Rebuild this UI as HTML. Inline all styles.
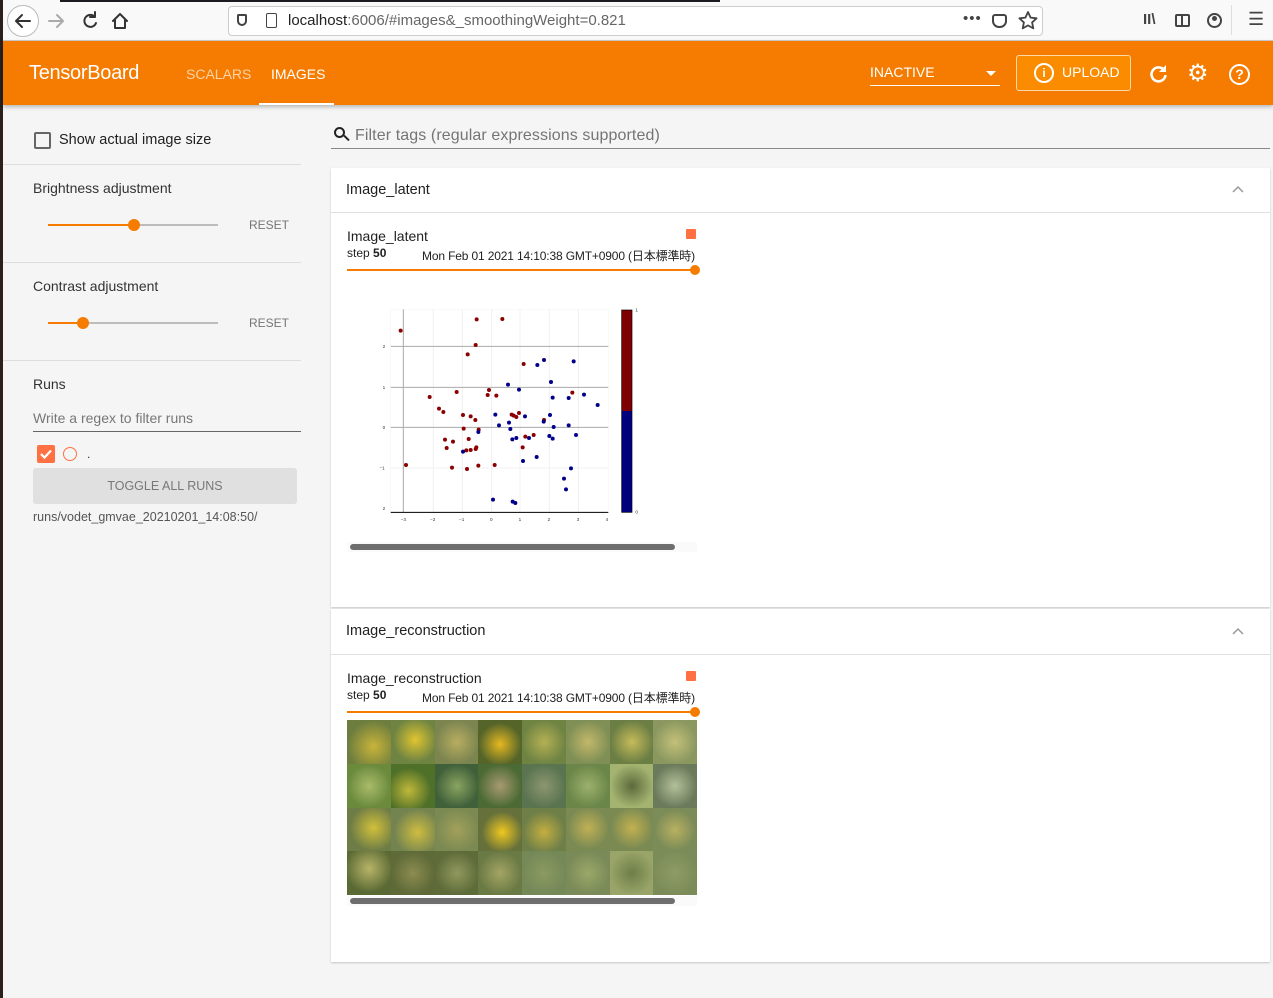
<!DOCTYPE html>
<html><head><meta charset="utf-8"><style>
*{box-sizing:border-box;margin:0;padding:0}
body{width:1273px;height:998px;overflow:hidden;background:#f5f5f5;font-family:"Liberation Sans","Noto Sans CJK JP",sans-serif;position:relative;color:#212121}
.a{position:absolute}
.t{position:absolute;white-space:nowrap}
.tile{position:absolute;width:44px;height:44px}
</style></head><body>
<!-- browser chrome -->
<div class="a" style="left:0;top:0;width:1273px;height:41px;background:#f9f9fa;border-bottom:1px solid #ccc"></div>
<div class="a" style="left:0;top:0;width:3px;height:998px;background:#2a211b"></div>
<div class="a" style="left:60px;top:0;width:660px;height:2px;background:#1c1b22"></div>
<div class="a" style="left:7px;top:5px;width:32px;height:32px;border:1px solid #bbb;border-radius:50%;background:#fff"></div>
<svg class="a" style="left:0;top:0" width="140" height="41"><g fill="none" stroke-width="2" stroke-linecap="round" stroke-linejoin="round">
<path d="M30 21H16M22 15l-6 6 6 6" stroke="#333"/><path d="M49 21h14M57 15l6 6-6 6" stroke="#aaa"/>
<path d="M95 17a6 6 0 1 0 1 6M95 12v5h-5" stroke="#333"/><path d="M113 21l7-7 7 7M115 19v9h10v-9" stroke="#333"/></g></svg>
<div class="a" style="left:228px;top:6px;width:815px;height:30px;background:#fff;border:1px solid #ccc;border-radius:4px"></div>
<div class="a" style="left:237px;top:14px;width:10px;height:12px;border:2px solid #444;border-radius:2px 2px 6px 6px"></div>
<div class="a" style="left:266px;top:13px;width:11px;height:15px;border:1.5px solid #444;border-radius:2px"></div>
<div class="t" style="left:288px;top:12px;font-size:15px;color:#222">localhost<span style="color:#666">:6006/#images&amp;_smoothingWeight=0.821</span></div>
<div class="t" style="left:963px;top:10px;font-size:15px;color:#444;letter-spacing:1px">•••</div>
<div class="a" style="left:992px;top:14px;width:15px;height:14px;border:2px solid #444;border-radius:3px 3px 7px 7px"></div>
<svg class="a" style="left:1018px;top:11px" width="20" height="20"><path d="M10 1l2.6 5.6 6 .7-4.5 4.1 1.2 6L10 14.4 4.7 17.4l1.2-6L1.4 7.3l6-.7z" fill="none" stroke="#444" stroke-width="1.8" stroke-linejoin="round"/></svg>
<div class="t" style="left:1143px;top:11px;font-size:15px;color:#444;font-weight:bold">II\</div>
<div class="a" style="left:1175px;top:14px;width:15px;height:13px;border:2px solid #444;border-radius:2px"></div>
<div class="a" style="left:1181px;top:14px;width:2px;height:13px;background:#444"></div>
<div class="a" style="left:1207px;top:13px;width:15px;height:15px;border:2px solid #444;border-radius:50%"></div>
<div class="a" style="left:1212px;top:16px;width:5px;height:5px;background:#444;border-radius:50%"></div>
<div class="a" style="left:1231px;top:5px;width:1px;height:30px;background:#ddd"></div>
<div class="t" style="left:1248px;top:9px;font-size:18px;color:#444">☰</div>
<!-- header -->
<div class="a" style="left:3px;top:41px;width:1270px;height:64px;background:#f57c00;box-shadow:0 2px 4px rgba(0,0,0,.25)"></div>
<div class="t" style="left:29px;top:62px;font-size:20px;color:#fff;letter-spacing:-0.3px">TensorBoard</div>
<div class="t" style="left:186px;top:66px;font-size:14px;color:#fdd3a8">SCALARS</div>
<div class="t" style="left:271px;top:66px;font-size:14px;color:#fff">IMAGES</div>
<div class="a" style="left:259px;top:103px;width:75px;height:2px;background:#fff"></div>
<div class="t" style="left:870px;top:64px;font-size:14px;color:#fff">INACTIVE</div>
<div class="a" style="left:986px;top:71px;width:0;height:0;border-left:5px solid transparent;border-right:5px solid transparent;border-top:5px solid #fff"></div>
<div class="a" style="left:870px;top:85px;width:130px;height:1px;background:#fff"></div>
<div class="a" style="left:1016px;top:55px;width:115px;height:36px;border:1px solid #fcd7a8;border-radius:3px;background:#fb8c00"></div>
<div class="a" style="left:1034px;top:63px;width:20px;height:20px;border:2px solid #fff;border-radius:50%;color:#fff;font-size:12px;text-align:center;line-height:16px;font-weight:bold">i</div>
<div class="t" style="left:1062px;top:64px;font-size:14px;color:#fff">UPLOAD</div>
<svg class="a" style="left:1148px;top:63px" width="22" height="22"><path d="M16 7a7 7 0 1 0 1.5 5" fill="none" stroke="#fff" stroke-width="2.6"/><path d="M18 2v7h-7z" fill="#fff"/></svg>
<div class="t" style="left:1187px;top:59px;font-size:24px;color:#fff">⚙</div>
<div class="a" style="left:1229px;top:64px;width:21px;height:21px;border:2px solid #fff;border-radius:50%;color:#fff;font-size:14px;text-align:center;line-height:17px;font-weight:bold">?</div>
<!-- sidebar -->
<div class="a" style="left:34px;top:132px;width:17px;height:17px;border:2px solid #666;border-radius:2px"></div>
<div class="t" style="left:59px;top:132px;font-size:14.5px;color:#212121">Show actual image size</div>
<div class="a" style="left:3px;top:164px;width:298px;height:1px;background:#ddd"></div>
<div class="t" style="left:33px;top:180px;font-size:14px;color:#333">Brightness adjustment</div>
<div class="a" style="left:48px;top:224px;width:170px;height:2px;background:#bdbdbd"></div>
<div class="a" style="left:48px;top:224px;width:86px;height:2px;background:#f57c00"></div>
<div class="a" style="left:128px;top:219px;width:12px;height:12px;border-radius:50%;background:#f57c00"></div>
<div class="t" style="left:249px;top:218px;font-size:12px;color:#757575">RESET</div>
<div class="a" style="left:3px;top:262px;width:298px;height:1px;background:#ddd"></div>
<div class="t" style="left:33px;top:278px;font-size:14px;color:#333">Contrast adjustment</div>
<div class="a" style="left:48px;top:322px;width:170px;height:2px;background:#bdbdbd"></div>
<div class="a" style="left:48px;top:322px;width:35px;height:2px;background:#f57c00"></div>
<div class="a" style="left:77px;top:317px;width:12px;height:12px;border-radius:50%;background:#f57c00"></div>
<div class="t" style="left:249px;top:316px;font-size:12px;color:#757575">RESET</div>
<div class="a" style="left:3px;top:360px;width:298px;height:1px;background:#ddd"></div>
<div class="t" style="left:33px;top:376px;font-size:14px;color:#333">Runs</div>
<div class="t" style="left:33px;top:410px;font-size:14px;color:#777">Write a regex to filter runs</div>
<div class="a" style="left:33px;top:431px;width:268px;height:1px;background:#666"></div>
<div class="a" style="left:37px;top:445px;width:18px;height:18px;border-radius:2px;background:#ff7043"></div>
<svg class="a" style="left:37px;top:445px" width="18" height="18"><path d="M4 9l3.5 3.5L14 5.5" fill="none" stroke="#fff" stroke-width="2.2"/></svg>
<div class="a" style="left:63px;top:447px;width:14px;height:14px;border-radius:50%;border:1.5px solid #ff7043"></div>
<div class="t" style="left:87px;top:447px;font-size:12px;color:#333">.</div>
<div class="a" style="left:33px;top:468px;width:264px;height:36px;background:#e0e0e0;border-radius:3px;text-align:center;line-height:36px;font-size:12.5px;color:#777">TOGGLE ALL RUNS</div>
<div class="t" style="left:33px;top:510px;font-size:12.5px;color:#555">runs/vodet_gmvae_20210201_14:08:50/</div>
<!-- filter -->
<div class="a" style="left:334px;top:127px;width:11px;height:11px;border:2px solid #222;border-radius:50%"></div>
<div class="a" style="left:343px;top:137px;width:7px;height:2px;background:#222;transform:rotate(45deg)"></div>
<div class="t" style="left:355px;top:127px;font-size:16px;color:#757575;letter-spacing:0.1px">Filter tags (regular expressions supported)</div>
<div class="a" style="left:331px;top:148px;width:939px;height:1px;background:#888"></div>
<!-- card 1 -->
<div class="a" style="left:331px;top:168px;width:939px;height:439px;background:#fff;box-shadow:0 1px 2px rgba(0,0,0,.2)"></div>
<div class="a" style="left:331px;top:212px;width:939px;height:1px;background:#e0e0e0"></div>
<div class="t" style="left:346px;top:182px;font-size:14.5px;color:#212121">Image_latent</div>
<svg class="a" style="left:1231px;top:184px" width="14" height="10"><path d="M2 8l5-5 5 5" fill="none" stroke="#999" stroke-width="1.5"/></svg>
<div class="t" style="left:347px;top:228px;font-size:14px;color:#212121">Image_latent</div>
<div class="t" style="left:347px;top:246px;font-size:12px;color:#212121">step <b>50</b></div>
<div class="t" style="left:422px;top:247px;font-size:12px;color:#212121;letter-spacing:-0.15px">Mon Feb 01 2021 14:10:38 GMT+0900 (日本標準時)</div>
<div class="a" style="left:686px;top:229px;width:10px;height:10px;background:#ff7043;border-radius:1px"></div>
<div class="a" style="left:347px;top:269px;width:348px;height:2px;background:#f57c00"></div>
<div class="a" style="left:690px;top:265px;width:10px;height:10px;border-radius:50%;background:#f57c00"></div>
<svg class="a" style="left:340px;top:220px" width="370" height="340" viewBox="0 0 1110 1020">
<rect x="152" y="268" width="653" height="609" fill="#fff" stroke="#eee"/>
<g stroke="#f0f0f0" stroke-width="3"><line x1="280" y1="268" x2="280" y2="877"/><line x1="367" y1="268" x2="367" y2="877"/><line x1="455" y1="268" x2="455" y2="877"/><line x1="540" y1="268" x2="540" y2="877"/><line x1="628" y1="268" x2="628" y2="877"/><line x1="715" y1="268" x2="715" y2="877"/><line x1="152" y1="744" x2="805" y2="744"/></g>
<g stroke="#aaa" stroke-width="3"><line x1="152" y1="379" x2="805" y2="379"/><line x1="152" y1="502" x2="805" y2="502"/><line x1="152" y1="622" x2="805" y2="622"/><line x1="190" y1="268" x2="190" y2="877"/></g>
<line x1="152" y1="877" x2="805" y2="877" stroke="#000" stroke-width="3"/>
<g font-size="14" fill="#333" font-family="Liberation Sans"><text x="128" y="384">2</text><text x="128" y="507">1</text><text x="128" y="627">0</text><text x="118" y="749">−1</text><text x="128" y="870">2</text>
<text x="182" y="903">−3</text><text x="270" y="903">−2</text><text x="357" y="903">−1</text><text x="450" y="903">0</text><text x="536" y="903">1</text><text x="623" y="903">2</text><text x="710" y="903">3</text><text x="797" y="903">4</text><text x="886" y="275">1</text><text x="886" y="880">0</text></g>
<rect x="845" y="270" width="31" height="303" fill="#7f0000"/><rect x="845" y="573" width="31" height="304" fill="#00007f"/><rect x="845" y="270" width="31" height="607" fill="none" stroke="#000" stroke-width="2"/>
<g fill="#8b0000">
<circle cx="182" cy="332" r="6"/><circle cx="410" cy="298" r="6"/><circle cx="487" cy="297" r="6"/><circle cx="407" cy="375" r="6"/><circle cx="383" cy="403" r="6"/><circle cx="551" cy="432" r="6"/><circle cx="269" cy="531" r="6"/><circle cx="350" cy="516" r="6"/><circle cx="447" cy="510" r="6"/><circle cx="443" cy="525" r="6"/><circle cx="469" cy="527" r="6"/><circle cx="297" cy="566" r="6"/><circle cx="310" cy="576" r="6"/><circle cx="369" cy="585" r="6"/><circle cx="392" cy="589" r="6"/><circle cx="406" cy="600" r="6"/><circle cx="515" cy="584" r="6"/><circle cx="521" cy="587" r="6"/><circle cx="529" cy="591" r="6"/><circle cx="537" cy="579" r="6"/><circle cx="612" cy="600" r="6"/><circle cx="697" cy="518" r="6"/><circle cx="371" cy="626" r="6"/><circle cx="416" cy="629" r="6"/><circle cx="315" cy="659" r="6"/><circle cx="339" cy="665" r="6"/><circle cx="386" cy="657" r="6"/><circle cx="320" cy="684" r="6"/><circle cx="556" cy="650" r="6"/><circle cx="581" cy="645" r="6"/><circle cx="548" cy="682" r="6"/><circle cx="409" cy="682" r="6"/><circle cx="379" cy="691" r="6"/><circle cx="392" cy="690" r="6"/><circle cx="407" cy="687" r="6"/><circle cx="198" cy="735" r="6"/><circle cx="336" cy="743" r="6"/><circle cx="381" cy="747" r="6"/><circle cx="415" cy="737" r="6"/><circle cx="464" cy="735" r="6"/></g>
<g fill="#00008b">
<circle cx="504" cy="494" r="6"/><circle cx="537" cy="509" r="6"/><circle cx="592" cy="435" r="6"/><circle cx="612" cy="420" r="6"/><circle cx="701" cy="424" r="6"/><circle cx="633" cy="486" r="6"/><circle cx="638" cy="533" r="6"/><circle cx="686" cy="534" r="6"/><circle cx="732" cy="524" r="6"/><circle cx="773" cy="555" r="6"/><circle cx="466" cy="584" r="6"/><circle cx="555" cy="589" r="6"/><circle cx="630" cy="585" r="6"/><circle cx="611" cy="605" r="6"/><circle cx="507" cy="608" r="6"/><circle cx="477" cy="616" r="6"/><circle cx="511" cy="627" r="6"/><circle cx="641" cy="621" r="6"/><circle cx="686" cy="616" r="6"/><circle cx="415" cy="636" r="6"/><circle cx="517" cy="658" r="6"/><circle cx="529" cy="654" r="6"/><circle cx="567" cy="654" r="6"/><circle cx="628" cy="648" r="6"/><circle cx="638" cy="656" r="6"/><circle cx="708" cy="645" r="6"/><circle cx="369" cy="695" r="6"/><circle cx="549" cy="723" r="6"/><circle cx="590" cy="711" r="6"/><circle cx="693" cy="745" r="6"/><circle cx="672" cy="776" r="6"/><circle cx="678" cy="808" r="6"/><circle cx="459" cy="839" r="6"/><circle cx="518" cy="845" r="6"/><circle cx="526" cy="849" r="6"/></g>
</svg>
<div class="a" style="left:347px;top:542px;width:350px;height:10px;background:#fafafa"></div>
<div class="a" style="left:350px;top:544px;width:325px;height:6px;border-radius:3px;background:#6e6e6e"></div>
<!-- card 2 -->
<div class="a" style="left:331px;top:609px;width:939px;height:353px;background:#fff;box-shadow:0 1px 2px rgba(0,0,0,.2)"></div>
<div class="a" style="left:331px;top:654px;width:939px;height:1px;background:#e0e0e0"></div>
<div class="t" style="left:346px;top:623px;font-size:14.5px;color:#212121">Image_reconstruction</div>
<svg class="a" style="left:1231px;top:626px" width="14" height="10"><path d="M2 8l5-5 5 5" fill="none" stroke="#999" stroke-width="1.5"/></svg>
<div class="t" style="left:347px;top:670px;font-size:14px;color:#212121">Image_reconstruction</div>
<div class="t" style="left:347px;top:688px;font-size:12px;color:#212121">step <b>50</b></div>
<div class="t" style="left:422px;top:689px;font-size:12px;color:#212121;letter-spacing:-0.15px">Mon Feb 01 2021 14:10:38 GMT+0900 (日本標準時)</div>
<div class="a" style="left:686px;top:671px;width:10px;height:10px;background:#ff7043;border-radius:1px"></div>
<div class="a" style="left:347px;top:711px;width:348px;height:2px;background:#f57c00"></div>
<div class="a" style="left:690px;top:707px;width:10px;height:10px;border-radius:50%;background:#f57c00"></div>
<div class="a" style="left:347px;top:720px;width:350px;height:175px;background:#7a8a4a;overflow:hidden">
<div class="tile" style="left:0;top:0;background:radial-gradient(circle at 60% 60%,#c9b43a,#6c7d3e 70%)"></div>
<div class="tile" style="left:44px;top:0;background:radial-gradient(circle at 55% 45%,#e0c530,#6f8442 65%)"></div>
<div class="tile" style="left:88px;top:0;background:radial-gradient(circle at 50% 50%,#b8ad60,#7c8550 70%)"></div>
<div class="tile" style="left:131px;top:0;background:radial-gradient(circle at 50% 55%,#e6b820,#55652a 65%)"></div>
<div class="tile" style="left:175px;top:0;background:radial-gradient(circle at 50% 50%,#b4b054,#6f8443 70%)"></div>
<div class="tile" style="left:219px;top:0;background:radial-gradient(circle at 50% 50%,#c2b86a,#7f8f55 70%)"></div>
<div class="tile" style="left:263px;top:0;background:radial-gradient(circle at 50% 50%,#c6bb5a,#6b7e44 70%)"></div>
<div class="tile" style="left:306px;top:0;background:radial-gradient(circle at 50% 50%,#c4c078,#8a9860 70%)"></div>
<div class="tile" style="left:0;top:44px;background:radial-gradient(circle at 50% 50%,#a8bb6a,#6b8a3c 70%)"></div>
<div class="tile" style="left:44px;top:44px;background:radial-gradient(circle at 40% 60%,#c0b83a,#4f7028 60%)"></div>
<div class="tile" style="left:88px;top:44px;background:radial-gradient(circle at 50% 50%,#8aa460,#40603a 70%)"></div>
<div class="tile" style="left:131px;top:44px;background:radial-gradient(circle at 50% 50%,#a89a70,#4c6a34 70%)"></div>
<div class="tile" style="left:175px;top:44px;background:radial-gradient(circle at 50% 50%,#8c9670,#5a7450 70%)"></div>
<div class="tile" style="left:219px;top:44px;background:radial-gradient(circle at 50% 50%,#9cb06c,#6a8648 70%)"></div>
<div class="tile" style="left:263px;top:44px;background:radial-gradient(circle at 50% 50%,#5c6a3c,#a4b470 70%)"></div>
<div class="tile" style="left:306px;top:44px;background:radial-gradient(circle at 50% 50%,#b4c09a,#6a7a5a 70%)"></div>
<div class="tile" style="left:0;top:88px;background:radial-gradient(circle at 60% 45%,#d2c03a,#6e7d46 65%)"></div>
<div class="tile" style="left:44px;top:88px;background:radial-gradient(circle at 60% 55%,#cfbd40,#748450 65%)"></div>
<div class="tile" style="left:88px;top:88px;background:radial-gradient(circle at 50% 50%,#a2a05a,#7b8a52 70%)"></div>
<div class="tile" style="left:131px;top:88px;background:radial-gradient(circle at 55% 55%,#f0c820,#66703a 60%)"></div>
<div class="tile" style="left:175px;top:88px;background:radial-gradient(circle at 50% 55%,#c4ae40,#6e7f48 65%)"></div>
<div class="tile" style="left:219px;top:88px;background:radial-gradient(circle at 50% 45%,#c0b055,#7a8a52 65%)"></div>
<div class="tile" style="left:263px;top:88px;background:radial-gradient(circle at 50% 45%,#c2b050,#7a8a52 65%)"></div>
<div class="tile" style="left:306px;top:88px;background:radial-gradient(circle at 50% 50%,#b8b060,#7c8c58 65%)"></div>
<div class="tile" style="left:0;top:131px;background:radial-gradient(circle at 50% 40%,#b8b468,#5a6a34 70%)"></div>
<div class="tile" style="left:44px;top:131px;background:radial-gradient(circle at 50% 50%,#8c8c50,#5e6a38 70%)"></div>
<div class="tile" style="left:88px;top:131px;background:radial-gradient(circle at 50% 50%,#90985c,#5e6c3a 70%)"></div>
<div class="tile" style="left:131px;top:131px;background:radial-gradient(circle at 50% 50%,#a4a464,#6a7a44 70%)"></div>
<div class="tile" style="left:175px;top:131px;background:radial-gradient(circle at 50% 50%,#8a9a60,#758858 70%)"></div>
<div class="tile" style="left:219px;top:131px;background:radial-gradient(circle at 50% 50%,#9aa868,#7a8a58 70%)"></div>
<div class="tile" style="left:263px;top:131px;background:radial-gradient(circle at 50% 50%,#6e7e48,#98a468 70%)"></div>
<div class="tile" style="left:306px;top:131px;background:radial-gradient(circle at 50% 50%,#8e9c66,#7c8c58 70%)"></div>
</div>
<div class="a" style="left:347px;top:896px;width:350px;height:10px;background:#fafafa"></div>
<div class="a" style="left:350px;top:898px;width:325px;height:6px;border-radius:3px;background:#6e6e6e"></div>
</body></html>
